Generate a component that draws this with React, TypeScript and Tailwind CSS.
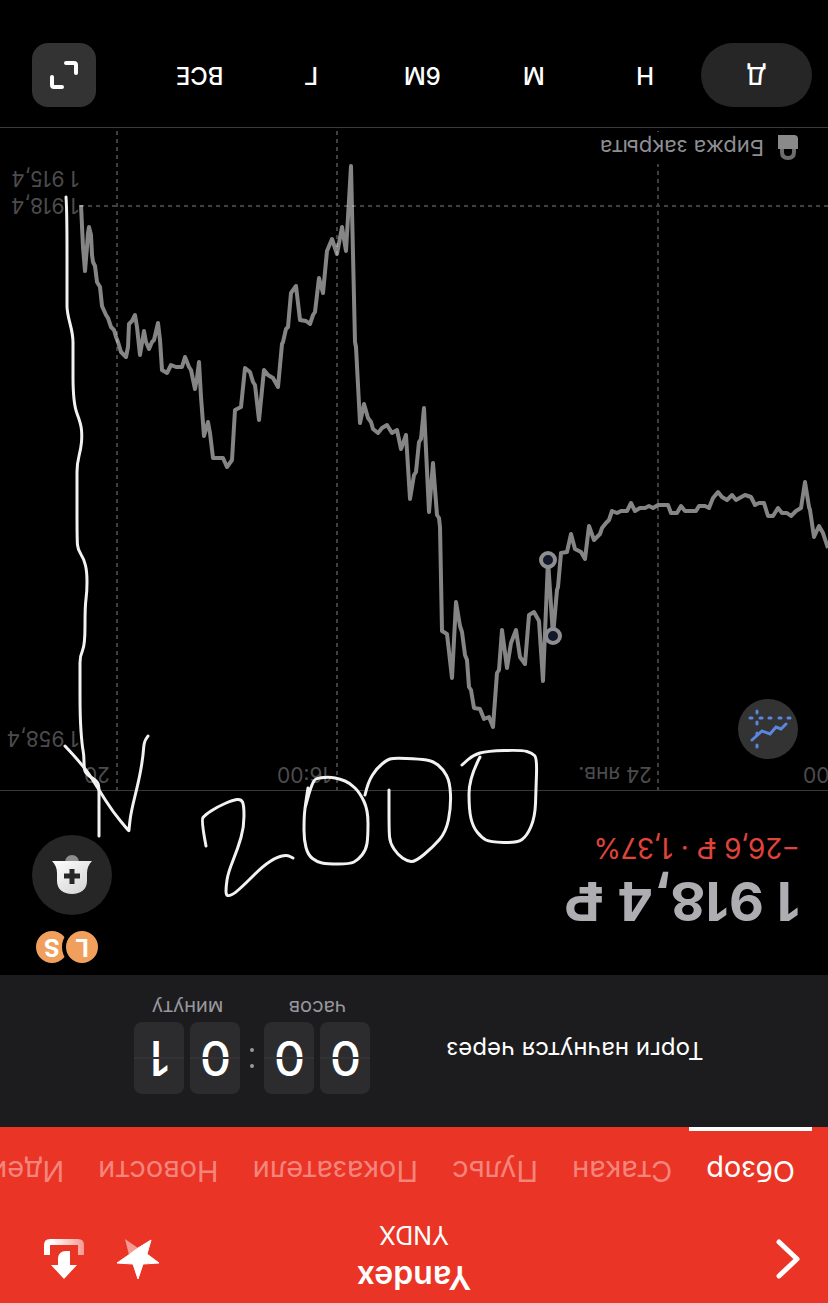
import { useState } from "react"

const TABS = ["Обзор", "Стакан", "Пульс", "Показатели", "Новости", "Идеи"]
const RANGES = ["Д", "Н", "М", "6М", "Г", "ВСЕ"]

// the price line, latest value first
const PRICE_LINE =
  "81,205 83,247 85,271 87,247 88,233 89,227 91,235 92,255 93,262 95,266 97,282 100,287 102,306 106,315 108,318 111,327 114,330 116,337 118,342 121,352 126,357 128,347 129,324 132,321 135,315 137,327 140,355 142,343 144,331 146,342 149,349 152,342 154,340 158,323 160,340 162,370 167,373 171,365 176,367 182,367 185,357 189,367 191,370 195,389 197,378 199,362 201,397 204,436 208,422 210,433 213,458 223,458 227,467 232,460 235,410 241,407 245,368 250,372 253,382 255,385 259,420 264,370 268,375 273,378 278,387 282,344 283,342 286,329 288,327 291,293 296,286 300,320 306,321 310,324 313,315 315,312 319,278 323,293 327,251 332,239 337,254 342,227 346,251 351,166 355,342 356,347 360,423 364,404 368,418 371,422 373,429 378,433 382,428 387,425 392,433 397,430 401,449 406,435 410,499 414,475 416,472 419,442 421,439 424,408 429,512 433,463 437,515 439,518 440,527 442,631 447,634 452,678 456,602 460,626 462,632 465,655 467,660 469,687 471,690 474,708 480,709 484,719 489,717 493,727 497,673 499,670 502,630 507,668 511,643 516,630 520,657 525,664 529,615 534,612 539,621 543,681 548,560 553,636 557,590 558,587 561,553 567,552 571,534 575,549 581,552 585,559 589,526 594,540 600,534 602,528 606,523 609,520 612,511 617,513 621,511 627,511 631,503 635,511 640,508 645,508 649,506 653,508 658,505 668,505 671,513 677,513 681,506 685,511 696,511 699,506 705,506 709,508 713,498 718,492 722,497 727,500 732,495 736,500 745,495 751,497 755,505 759,503 764,503 768,516 773,516 778,508 782,513 787,513 791,516 796,511 801,508 805,482 809,507 810,510 814,537 819,526 823,533 828,548"

// hand-drawn marks on top of the screen
const STROKES = [
  [66,197,67,210,67,300,67,312,73,335,73,350,73,403,81,424,82,436,81,448,77,464,77,480,77,540,78,550,84,559,87,572,87,592,85,606,85,645,80,656,80,670,80,717,82,745,84,755,84,768,86,774,97,781,99,786,99,800,99,836],
  [65,746,84,766,99,790,113,812,128,830,129,831,129,829,131,812,139,780,143,757,144,742,148,736],
  [206,846,201,820,205,815,217,807,233,800,241,799,244,805,244,827,238,848,228,873,226,887,226,895,229,896,235,893,245,884,263,866,277,857,287,855,293,858],
  [308,788,305,807,304,820,304,840,308,855,317,862,327,864,350,864,358,860,366,850,368,837,368,810,360,793,350,783,340,779,330,777,318,778,314,780,310,790,305,808],
  [365,795,368,782,377,768,387,760,393,758,420,759,433,761,443,769,450,782,451,807,446,832,433,847,415,862,407,861,398,855,390,843,389,830,389,790],
  [480,757,469,778,469,810,473,827,482,838,490,842,517,843,527,836,535,817,536,790,537,758,532,753,522,750,487,751,473,755,462,765],
]

function smooth(p: number[]) {
  let d = `M${p[0]} ${p[1]}`
  for (let i = 2; i < p.length - 2; i += 2) {
    d += `Q${p[i]} ${p[i + 1]} ${(p[i] + p[i + 2]) / 2} ${(p[i + 1] + p[i + 3]) / 2}`
  }
  return d + `L${p[p.length - 2]} ${p[p.length - 1]}`
}

function Header() {
  return (
    <div className="grid h-[88px] grid-cols-3 items-center">
      <button aria-label="Назад" className="ml-7 w-6">
        <svg viewBox="0 0 24 40" className="h-10 w-6" fill="none" stroke="white" strokeWidth="5" strokeLinecap="round" strokeLinejoin="round">
          <path d="M21 3L3 20L21 37" />
        </svg>
      </button>
      <div className="pt-1 text-center">
        <h1 className="text-[32px] leading-[44px] font-semibold">Yandex</h1>
        <p className="text-[25px] leading-[40px]">YNDX</p>
      </div>
      <div className="mr-11 flex items-center justify-end gap-[30px]">
        <button aria-label="В избранное">
          <svg viewBox="0 0 48 46" className="h-[46px] w-12" fill="white">
            <path d="M24 34L37 43L33 27Z" opacity="0.5" />
            <path d="M24 3L29 18L45 19L32 28L24 34L11 42L15 28L3 19L19 18Z" stroke="white" strokeLinejoin="round" />
          </svg>
        </button>
        <button aria-label="Поделиться">
          <svg viewBox="0 0 40 40" className="size-10">
            <defs>
              <linearGradient id="tray" gradientUnits="userSpaceOnUse" x1="0" y1="0" x2="40" y2="0">
                <stop offset="0" stopColor="white" stopOpacity="0.5" />
                <stop offset="0.8" stopColor="white" />
              </linearGradient>
            </defs>
            <path d="M3 24V34Q3 37 6 37H34Q37 37 37 34V24" fill="none" stroke="url(#tray)" strokeWidth="6" />
            <path d="M20 0L33 14H26V20C26 25 23 28 18 28H14V14H7Z" fill="white" />
          </svg>
        </button>
      </div>
    </div>
  )
}

function Tabs() {
  const [active, setActive] = useState("Обзор")
  return (
    <nav className="flex h-[88px] overflow-hidden pl-4 text-[29px]">
      {TABS.map((tab) => (
        <button
          key={tab}
          onClick={() => setActive(tab)}
          className={
            tab === active
              ? "shrink-0 border-b-4 border-white px-[17px] pt-1 whitespace-nowrap text-white"
              : "shrink-0 border-b-4 border-transparent px-[17px] pt-1 whitespace-nowrap text-[#f5857c]"
          }
        >
          {tab}
        </button>
      ))}
    </nav>
  )
}

function Digits({ value, label }: { value: string; label: string }) {
  return (
    <div className="text-center">
      <div className="flex gap-1.5">
        {value.split("").map((digit, i) => (
          <span key={i} className="relative h-[72px] w-[50px] rounded-lg bg-[#2c2c2e] text-[48px] leading-[72px] font-medium">
            {digit}
            <span className="absolute inset-x-0 top-[35px] h-0.5 bg-[#333335]" />
          </span>
        ))}
      </div>
      <div className="text-[20px] leading-7 text-[#98989d]">{label}</div>
    </div>
  )
}

function Countdown() {
  return (
    <div className="flex h-[152px] justify-center gap-[76px] bg-[#1c1c1e] pt-[33px] pr-2.5">
      <p className="text-[24px] leading-[88px]">Торги начнутся через</p>
      <div className="flex gap-[10px]">
        <Digits value="00" label="часов" />
        <div className="flex h-[72px] w-1 flex-col items-center justify-center gap-3">
          <span className="size-1 rounded-full bg-[#98989d]" />
          <span className="size-1 rounded-full bg-[#98989d]" />
        </div>
        <Digits value="01" label="минуту" />
      </div>
    </div>
  )
}

function Price() {
  return (
    <div className="flex h-[184px] justify-between pr-8 pl-7">
      <div className="pt-[42px]">
        <p className="text-[54px] leading-[64px] font-bold text-[#aeaeb2]">1 918,4 ₽</p>
        <p className="text-[28px] leading-[42px] text-[#e0443a]">−26,6 ₽ · 1,37%</p>
      </div>
      <div className="flex flex-col items-end gap-3 pt-2">
        <div className="flex text-[24px] font-bold">
          <span className="z-10 flex size-10 items-center justify-center rounded-full border-4 border-black bg-[#f0a05c]">L</span>
          <span className="-ml-[10px] flex size-10 items-center justify-center rounded-full border-4 border-black bg-[#f0a05c]">S</span>
        </div>
        <button aria-label="Добавить уведомление" className="rounded-full bg-[#262626]">
          <svg viewBox="0 0 80 80" className="size-20">
            <defs>
              <linearGradient id="bell" x1="0" y1="0" x2="1" y2="1">
                <stop offset="0" stopColor="#d0d0d0" />
                <stop offset="1" stopColor="white" />
              </linearGradient>
            </defs>
            <circle cx="40" cy="53" r="7" fill="#8e8e8e" />
            <path d="M20 54C23 51 25 47 25 42V34C25 26 31 21 40 21S55 26 55 34V42C55 47 57 51 60 54Z" fill="url(#bell)" />
            <path d="M40 31V46M32 39H48" stroke="#262626" strokeWidth="5" />
          </svg>
        </button>
      </div>
    </div>
  )
}

function Chart() {
  return (
    <div className="relative">
      <svg viewBox="0 0 828 664" className="block h-auto w-full" fontSize="21" fill="#4c4c4e">
        <g transform="translate(828 791) rotate(180)" fill="none">
          <polyline points={PRICE_LINE} stroke="#858585" strokeWidth="4" strokeLinejoin="round" />
          <g stroke="#8d8d92" strokeWidth="4">
            <circle cx="548" cy="560" r="7" fill="#12182a" />
            <circle cx="553" cy="636" r="7" fill="#12182a" />
          </g>
          <g stroke="white" strokeOpacity="0.25" strokeWidth="2" strokeDasharray="4 4">
            <path d="M80 206H828M117 131V790M337 131V790M658 131V790" />
          </g>
          <path d="M0 791H828" stroke="#3a3a3c" strokeWidth="2" />
          <path d="M0 127H828" stroke="#3a3a3c" strokeWidth="2" />
        </g>
        <text x="25" y="24" textAnchor="end">00</text>
        <text x="176" y="24">24 янв.</text>
        <text x="497" y="24">16:00</text>
        <text x="718" y="24">20</text>
        <text x="749" y="60">1 958,4</text>
        <text x="749" y="593">1 918,4</text>
        <text x="749" y="620">1 915,4</text>
      </svg>
      <button aria-label="Сравнить график" className="absolute top-8 left-[30px] rounded-full bg-[#333333]">
        <svg viewBox="0 0 60 60" className="size-[60px]" fill="none" stroke="#5b86e0" strokeWidth="3" strokeLinecap="round">
          <path d="M46 19L36 28L28 25L22 32L17 30L12 35" />
          <path d="M48 41H46M38 41H36M29 41H27M19 41H17M10 41H8M41 48V46M41 37V35M41 26V24M41 14V12" />
        </svg>
      </button>
      <p className="absolute bottom-[5px] left-[30px] flex h-8 items-center gap-[14px] bg-black pr-2 text-[22px] text-[#8e8e93]">
        <svg viewBox="0 0 20 26" className="h-[26px] w-5">
          <path d="M4 14V9Q4 3 10 3T16 9V14" fill="none" stroke="#6c6c6e" strokeWidth="4" />
          <path d="M0 12H20V26H4Q0 26 0 22Z" fill="#8a8a8a" />
        </svg>
        Биржа закрыта
      </p>
    </div>
  )
}

function Ranges() {
  const [range, setRange] = useState("Д")
  return (
    <div className="flex gap-12 pt-5 pr-8 pb-[43px] pl-4">
      <div className="grid flex-1 grid-cols-6 text-[24px] font-medium">
        {RANGES.map((r) => (
          <button key={r} onClick={() => setRange(r)} className={r === range ? "h-16 rounded-full bg-[#262626]" : "h-16 rounded-full"}>
            {r}
          </button>
        ))}
      </div>
      <button aria-label="На весь экран" className="size-16 rounded-2xl bg-[#333333]">
        <svg viewBox="0 0 64 64" className="size-16" fill="none" stroke="white" strokeWidth="4" strokeLinecap="round" strokeLinejoin="round">
          <path d="M30 44H22Q20 44 20 42V34M44 30V22Q44 20 42 20H34" />
        </svg>
      </button>
    </div>
  )
}

export default function App() {
  return (
    <main className="relative rotate-180 overflow-hidden bg-black font-[Inter,'Liberation_Sans',sans-serif] text-white">
      <header className="bg-[#ea3425]">
        <Header />
        <Tabs />
      </header>
      <Countdown />
      <Price />
      <Chart />
      <Ranges />
      <svg viewBox="0 0 828 1303" className="pointer-events-none absolute inset-x-0 top-0 z-20 w-full" fill="none" stroke="#f2f2f2" strokeWidth="3" strokeLinecap="round" strokeLinejoin="round">
        <g transform="translate(828 1303) rotate(180)">
          {STROKES.map((points, i) => (
            <path key={i} d={smooth(points)} />
          ))}
        </g>
      </svg>
    </main>
  )
}
